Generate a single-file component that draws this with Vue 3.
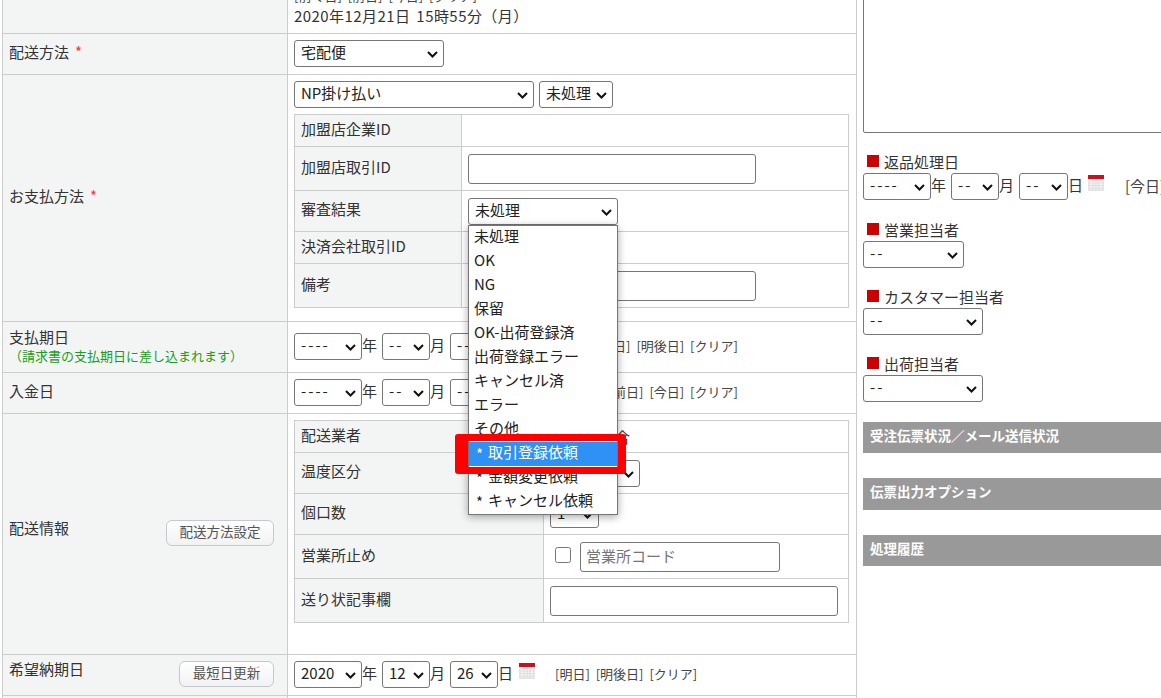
<script setup>
const options = ['未処理', 'OK', 'NG', '保留', 'OK-出荷登録済', '出荷登録エラー', 'キャンセル済', 'エラー', 'その他']
const requests = [
  { text: '取引登録依頼', active: true },
  { text: '金額変更依頼', active: false },
  { text: 'キャンセル依頼', active: false }
]
</script>

<template>
  <div class="page">
    <main class="form">
      <section class="row row-date">
        <div class="label"></div>
        <div class="value value-end">
          <p class="links links-top">[前々日] [前日] [今日] [クリア]</p>
          <p class="stamp">2020年12月21日 15時55分（月）</p>
        </div>
      </section>

      <section class="row row-ship">
        <div class="label"><span>配送方法<em>*</em></span></div>
        <div class="value value-top">
          <select class="sel w150"><option>宅配便</option></select>
        </div>
      </section>

      <section class="row row-pay">
        <div class="label"><span>お支払方法<em>*</em></span></div>
        <div class="value value-top">
          <div class="line">
            <select class="sel w240"><option>NP掛け払い</option></select>
            <select class="sel w74"><option>未処理</option></select>
          </div>
          <table class="sub sub-pay">
            <colgroup><col class="col-pay" /><col /></colgroup>
            <tbody>
              <tr class="h32"><th>加盟店企業ID</th><td></td></tr>
              <tr class="h44"><th>加盟店取引ID</th><td><input class="txt w288" type="text" /></td></tr>
              <tr class="h41"><th>審査結果</th><td><select class="sel w150"><option>未処理</option></select></td></tr>
              <tr class="h32"><th>決済会社取引ID</th><td></td></tr>
              <tr class="h44"><th>備考</th><td><input class="txt w288" type="text" /></td></tr>
            </tbody>
          </table>
        </div>
      </section>

      <section class="row row-due">
        <div class="label label-stack">
          <span>支払期日</span>
          <small>（請求書の支払期日に差し込まれます）</small>
        </div>
        <div class="value date">
          <select class="sel w68 dash"><option>----</option></select><span class="unit">年</span>
          <select class="sel w48 dash"><option>--</option></select><span class="unit">月</span>
          <select class="sel w48 dash"><option>--</option></select><span class="unit">日</span>
          <svg class="cal" viewBox="0 0 16 16"><rect width="16" height="16" fill="#e4e4e4" /><rect width="16" height="4" fill="#c9121b" /><rect x="2" y="6" width="12" height="8" fill="#f6f6f6" /><path d="M2 8h12M2 10.500h12M2 13h12M5 6v8M8 6v8M11 6v8" stroke="#d5d5d5" stroke-width=".7" /></svg>
          <span class="links">[今日] [明日] [明後日] [クリア]</span>
        </div>
      </section>

      <section class="row row-paid">
        <div class="label"><span>入金日</span></div>
        <div class="value date">
          <select class="sel w68 dash"><option>----</option></select><span class="unit">年</span>
          <select class="sel w48 dash"><option>--</option></select><span class="unit">月</span>
          <select class="sel w48 dash"><option>--</option></select><span class="unit">日</span>
          <svg class="cal" viewBox="0 0 16 16"><rect width="16" height="16" fill="#e4e4e4" /><rect width="16" height="4" fill="#c9121b" /><rect x="2" y="6" width="12" height="8" fill="#f6f6f6" /><path d="M2 8h12M2 10.500h12M2 13h12M5 6v8M8 6v8M11 6v8" stroke="#d5d5d5" stroke-width=".7" /></svg>
          <span class="links">[前々日] [前日] [今日] [クリア]</span>
        </div>
      </section>

      <section class="row row-info">
        <div class="label label-split">
          <span class="raised">配送情報</span>
          <button class="btn" type="button">配送方法設定</button>
        </div>
        <div class="value value-top">
          <table class="sub">
            <colgroup><col class="col-info" /><col /></colgroup>
            <tbody>
              <tr class="h32"><th>配送業者</th><td class="carrier">合</td></tr>
              <tr class="h41"><th>温度区分</th><td><select class="sel w90"><option>常温</option></select></td></tr>
              <tr class="h41"><th>個口数</th><td><select class="sel w49"><option>1</option></select></td></tr>
              <tr class="h44"><th>営業所止め</th><td><div class="office"><input class="check" type="checkbox" /><input class="txt w200" type="text" placeholder="営業所コード" /></div></td></tr>
              <tr class="h44"><th>送り状記事欄</th><td><input class="txt w288" type="text" /></td></tr>
            </tbody>
          </table>
        </div>
      </section>

      <section class="row row-hope">
        <div class="label label-split">
          <span class="raised">希望納期日</span>
          <button class="btn btn-small" type="button">最短日更新</button>
        </div>
        <div class="value date">
          <select class="sel w68"><option>2020</option></select><span class="unit">年</span>
          <select class="sel w48"><option>12</option></select><span class="unit">月</span>
          <select class="sel w48"><option>26</option></select><span class="unit">日</span>
          <svg class="cal" viewBox="0 0 16 16"><rect width="16" height="16" fill="#e4e4e4" /><rect width="16" height="4" fill="#c9121b" /><rect x="2" y="6" width="12" height="8" fill="#f6f6f6" /><path d="M2 8h12M2 10.500h12M2 13h12M5 6v8M8 6v8M11 6v8" stroke="#d5d5d5" stroke-width=".7" /></svg>
          <span class="links">[明日] [明後日] [クリア]</span>
        </div>
      </section>

      <section class="row row-tail">
        <div class="label"></div>
        <div class="value"></div>
      </section>
    </main>

    <aside class="side">
      <textarea class="note"></textarea>

      <div class="group">
        <div class="cap"><i></i>返品処理日</div>
        <div class="date">
          <select class="sel w68 dash"><option>----</option></select><span class="unit">年</span>
          <select class="sel w48 dash"><option>--</option></select><span class="unit">月</span>
          <select class="sel w49 dash"><option>--</option></select><span class="unit">日</span>
          <svg class="cal" viewBox="0 0 16 16"><rect width="16" height="16" fill="#e4e4e4" /><rect width="16" height="4" fill="#c9121b" /><rect x="2" y="6" width="12" height="8" fill="#f6f6f6" /><path d="M2 8h12M2 10.500h12M2 13h12M5 6v8M8 6v8M11 6v8" stroke="#d5d5d5" stroke-width=".7" /></svg>
          <span class="links today">[今日]</span>
        </div>
      </div>
      <div class="group group-second">
        <div class="cap"><i></i>営業担当者</div>
        <select class="sel w101 dash"><option>--</option></select>
      </div>
      <div class="group">
        <div class="cap"><i></i>カスタマー担当者</div>
        <select class="sel w120 dash"><option>--</option></select>
      </div>
      <div class="group">
        <div class="cap"><i></i>出荷担当者</div>
        <select class="sel w120 dash"><option>--</option></select>
      </div>

      <h3 class="bar bar-first">受注伝票状況／メール送信状況</h3>
      <h3 class="bar bar-tall">伝票出力オプション</h3>
      <h3 class="bar">処理履歴</h3>
    </aside>

    <ul class="menu">
      <li v-for="o in options" :key="o">{{ o }}</li>
      <li v-for="r in requests" :key="r.text" :class="{ active: r.active }"><b>*</b>{{ r.text }}</li>
    </ul>
    <div class="mark"></div>
  </div>
</template>

<style>
html, body { margin: 0; background: #fff; }
</style>

<style scoped>
.page {
  position: relative;
  display: flex;
  width: 1161px;
  height: 698px;
  overflow: hidden;
  font-family: "Noto Sans CJK JP", "Noto Sans", sans-serif;
  font-size: 15px;
  line-height: 20px;
  color: #333;
  background: #fff;
}
.form {
  flex: none;
  box-sizing: border-box;
  width: 855px;
  margin-left: 2px;
  border-left: 1px solid #ccc;
  border-right: 1px solid #ccc;
}
.row {
  display: grid;
  grid-template-columns: 285px 1fr;
  grid-template-rows: minmax(0, 1fr);
  box-sizing: border-box;
  border-bottom: 1px solid #ccc;
}
.row-date { height: 34px; }
.row-ship { height: 41px; }
.row-pay { height: 247px; }
.row-due { height: 51px; }
.row-paid { height: 41px; }
.row-info { height: 241px; }
.row-hope { height: 41px; }
.row-tail { height: 20px; border-bottom: 0; }
.label {
  display: flex;
  align-items: center;
  padding: 0 13px 5px 6px;
  background: #f3f5f5;
  border-right: 1px solid #ccc;
}
.label em {
  margin-left: 6px;
  font-style: normal;
  color: #f33;
}
.label-stack {
  flex-direction: column;
  align-items: flex-start;
  justify-content: center;
  padding-bottom: 3px;
}
.label-stack small {
  font-size: 13px;
  line-height: 18px;
  color: #18a018;
}
.label-split {
  justify-content: space-between;
  padding-bottom: 2px;
}
.raised { padding-bottom: 10px; }
.btn {
  box-sizing: border-box;
  width: 108px;
  height: 26px;
  padding: 0 0 4px;
  font: 13.5px/18px "Noto Sans CJK JP", sans-serif;
  color: #555;
  background: linear-gradient(#fff, #f2f2f2);
  border: 1px solid #c4c8d0;
  border-radius: 6px;
}
.btn-small { width: 95px; }
.value { min-width: 0; overflow: hidden; padding-left: 6px; padding-right: 7px; }
.value-top { padding-top: 6px; }
.value-end {
  display: flex;
  flex-direction: column;
  justify-content: flex-end;
  padding-bottom: 7px;
}
.value-end p { flex: none; margin: 0; }
.stamp { letter-spacing: .45px; word-spacing: 2px; }
.line { display: flex; gap: 5px; margin-bottom: 6px; }
.sel {
  flex: none;
  box-sizing: border-box;
  height: 27px;
  padding: 0 18px 3px 6px;
  font: 15px/20px "Noto Sans CJK JP", sans-serif;
  color: #222;
  appearance: none;
  background: #fff url("data:image/svg+xml,%3Csvg xmlns='http://www.w3.org/2000/svg' width='11' height='7' viewBox='0 0 11 7'%3E%3Cpath d='M1 1l4.500 4.500L10 1' fill='none' stroke='%23111' stroke-width='2'/%3E%3C/svg%3E") no-repeat right 5px top 10px;
  border: 1px solid #767676;
  border-radius: 3px;
}
.dash { letter-spacing: 2px; }
.w48 { width: 48px; }
.w49 { width: 49px; }
.w68 { width: 68px; }
.w74 { width: 74px; }
.w90 { width: 90px; }
.w101 { width: 101px; }
.w120 { width: 120px; }
.w150 { width: 150px; }
.w240 { width: 240px; }
.txt {
  box-sizing: border-box;
  height: 31px;
  padding: 0 5px 3px;
  font: 15px "Noto Sans CJK JP", sans-serif;
  background: #fff;
  border: 1px solid #767676;
  border-radius: 3px;
}
.txt::placeholder { color: #757575; }
.w200 { width: 200px; height: 30px; }
.w288 { width: 288px; height: 30px; }
.sub {
  width: 555px;
  table-layout: fixed;
  border-collapse: collapse;
  border: 1px solid #ccc;
}
.col-pay { width: 167px; }
.col-info { width: 249px; }
.sub th, .sub td {
  box-sizing: border-box;
  padding: 0 0 0 6px;
  border: 1px solid #ccc;
}
.sub th {
  padding-bottom: 4px;
  font-weight: 400;
  text-align: left;
  background: #f3f5f5;
}
.h32 { height: 32px; }
.h41 { height: 41px; }
.h44 { height: 44px; }
.sub select, .sub input { display: block; }
.sub .carrier { padding-left: 71px; }
.office { display: flex; align-items: center; gap: 9px; padding-left: 5px; }
.sub .check { width: 16px; height: 16px; margin: 0 0 4px; }
.date {
  display: flex;
  align-items: center;
}
.value.date { padding-bottom: 1px; }
.unit { flex: none; width: 15px; margin: 0 5px 3px 0; }
.cal {
  flex: none;
  width: 16px;
  height: 16px;
  margin: -8px 0 0 1px;
}
.links {
  flex: none;
  margin-left: 20px;
  margin-bottom: 1px;
  font-size: 13px;
  word-spacing: 3px;
  color: #444;
  white-space: nowrap;
}
.links-top { margin-left: 0; margin-bottom: 0; }
.side {
  flex: none;
  width: 298px;
  margin-left: 6px;
  overflow: hidden;
}
.side .cal { margin: -7px 0 0; }
.side .today { margin-left: 21px; font-size: 15px; }
.note {
  display: block;
  box-sizing: border-box;
  width: 320px;
  height: 153px;
  margin-top: -20px;
  padding: 0;
  resize: none;
  background: #fff;
  border: 1px solid #767676;
  border-radius: 2px;
}
.group { margin-top: 20px; }
.group-second { margin-top: 21px; }
.cap {
  display: flex;
  align-items: center;
  box-sizing: border-box;
  height: 20px;
  padding-bottom: 2px;
}
.cap i {
  width: 12px;
  height: 12px;
  margin: -3px 5px 0 4px;
  background: #cc0000;
}
.group > .sel { display: block; }
.bar {
  box-sizing: border-box;
  height: 31px;
  margin: 25px 0 0;
  padding: 0 0 3px 7px;
  font-size: 13.5px;
  font-weight: 700;
  line-height: 26px;
  color: #fff;
  background: #999;
}
.bar-first { margin-top: 20px; }
.bar-tall { height: 32px; }
.menu {
  position: absolute;
  left: 468px;
  top: 225px;
  box-sizing: border-box;
  width: 150px;
  height: 290px;
  margin: 0;
  padding: 0;
  list-style: none;
  color: #222;
  background: #fff;
  border: 1px solid #767676;
  box-shadow: 0 2px 8px rgba(0, 0, 0, .35);
}
.menu li {
  height: 24px;
  padding-left: 5px;
  line-height: 20px;
  white-space: nowrap;
}
.menu b {
  display: inline-block;
  box-sizing: border-box;
  width: 14px;
  padding-left: 2px;
  font-weight: 400;
  vertical-align: -2px;
}
.menu .active {
  color: #fff;
  background: #2f90f5;
}
.mark {
  position: absolute;
  left: 455px;
  top: 434px;
  box-sizing: border-box;
  width: 171px;
  height: 40px;
  border: solid #f00;
  border-width: 7px 8px 7px 13px;
  border-radius: 3px;
}
</style>
